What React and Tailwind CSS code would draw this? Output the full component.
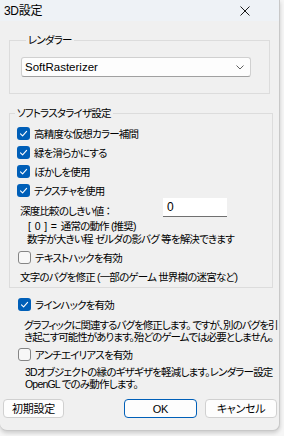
import React from 'react';

const FONT = "font-['Liberation_Sans','Noto_Sans_CJK_JP',sans-serif] [font-feature-settings:'palt']";

const Check = ({ checked }) =>
  checked ? (
    <span className="flex h-[13px] w-[13px] shrink-0 items-center justify-center rounded-[3px] bg-[#005fb8]">
      <svg width="9" height="9" viewBox="0 0 9 9" fill="none">
        <path d="M1.5 4.8 L3.6 6.8 L7.6 2.4" stroke="#ffffff" strokeWidth="1.1" strokeLinecap="round" strokeLinejoin="round" />
      </svg>
    </span>
  ) : (
    <span className="h-[13px] w-[13px] shrink-0 rounded-[3px] border border-[#858585] bg-[#f7f7f7]" />
  );

const CheckRow = ({ checked, label, className = '' }) => (
  <div className={`flex h-[19px] items-center gap-[4px] ${className}`}>
    <Check checked={checked} />
    <span>{label}</span>
  </div>
);

const Button = ({ children, primary, className = '' }) => (
  <button
    className={`flex h-[19px] items-center justify-center rounded-[4px] bg-[#fdfdfd] text-[11px] tracking-[-0.3px] ${
      primary ? 'border-[1.5px] border-[#005fb8]' : 'border border-[#d0d0d0]'
    } ${className}`}
  >
    {children}
  </button>
);

export default function App() {
  return (
    <div className={`h-[436px] w-[284px] bg-[#f6f6f6] text-[10.5px] leading-[12px] tracking-[-0.8px] text-black ${FONT}`}>
      <div className="flex h-[431px] w-[280px] flex-col whitespace-nowrap rounded-b-[7px] border-r border-b border-[#c8c8c8] bg-[#f0f0f0] shadow-[0_2px_4px_rgba(0,0,0,0.18)]">
        {/* title bar */}
        <div className="flex h-[21px] shrink-0 items-center justify-between bg-[#eef2f6] pl-[4px] pr-[29px]">
          <span className="text-[12px] tracking-[-0.3px]">3D設定</span>
          <svg width="10" height="10" viewBox="0 0 10 10">
            <path d="M0.5 0.5 L9.5 9.5 M9.5 0.5 L0.5 9.5" stroke="#1a1a1a" strokeWidth="1" />
          </svg>
        </div>

        {/* renderer */}
        <fieldset className="mt-[12px] ml-[9px] h-[61px] w-[261px] shrink-0 border border-[#dcdcdc] pt-[10px] pl-[11px]">
          <legend className="ml-[5px] px-[2px] leading-[14px]">レンダラー</legend>
          <div className="flex h-[20px] w-[230px] items-center justify-between rounded-[3px] border border-[#d0d0d0] border-b-[#a0a0a0] bg-[#fdfdfd] pl-[3px] pr-[6px]">
            <span className="text-[11.5px] tracking-normal">SoftRasterizer</span>
            <svg width="8" height="5" viewBox="0 0 8 5">
              <path d="M0.5 0.5 L4 4 L7.5 0.5" stroke="#606060" strokeWidth="1" fill="none" />
            </svg>
          </div>
        </fieldset>

        {/* soft rasterizer */}
        <fieldset className="mt-[12px] ml-[9px] h-[182px] w-[264px] shrink-0 border border-[#dcdcdc] pt-[4px]">
          <legend className="ml-[5px] px-[2px] leading-[14px]">ソフトラスタライザ設定</legend>
          <div className="pl-[7px]">
            <CheckRow checked label="高精度な仮想カラー補間" />
            <CheckRow checked label="緑を滑らかにする" />
            <CheckRow checked label="ぼかしを使用" />
            <CheckRow checked label="テクスチャを使用" />
          </div>
          <div className="-mt-[2px] flex items-end pl-[10px]">
            <span className="w-[143px]">深度比較のしきい値 ：</span>
            <div className="flex h-[19px] w-[64px] items-center border-b border-[#707070] bg-white pl-[4px] text-[12px] tracking-normal">0</div>
          </div>
          <div className="mt-[3px] pl-[18px]">
            <span className="tracking-[0.4px]">[ 0 ] = </span>通常の動作 (推奨)
          </div>
          <div className="mt-[1px] pl-[17px]">数字が大きい程 ゼルダの影バグ 等を解決できます</div>
          <CheckRow label="テキストハックを有効" className="mt-[3px] pl-[8px]" />
          <div className="mt-[4px] pl-[10px]">文字のバグを修正 (一部のゲーム 世界樹の迷宮など)</div>
        </fieldset>

        <CheckRow checked label="ラインハックを有効" className="mt-[7px] pl-[18px]" />
        <div className="mt-[5px] pl-[24px] tracking-[-0.95px]">
          グラフィックに関連するバグを修正します。 ですが、別のバグを引
          <br />
          き起こす可能性があります。殆どのゲームでは必要としません。
        </div>
        <CheckRow label="アンチエイリアスを有効" className="mt-[2px] pl-[18px]" />
        <div className="mt-[2px] pl-[25px]">
          3Dオブジェクトの縁のギザギザを軽減します。レンダラー設定
          <br />
          OpenGL でのみ動作します。
        </div>

        <div className="mt-[9px] flex items-center pl-[3px]">
          <Button className="w-[61px]">初期設定</Button>
          <Button primary className="ml-[60px] w-[73px]">OK</Button>
          <Button className="ml-[8px] w-[72px]">キャンセル</Button>
        </div>
      </div>
    </div>
  );
}
